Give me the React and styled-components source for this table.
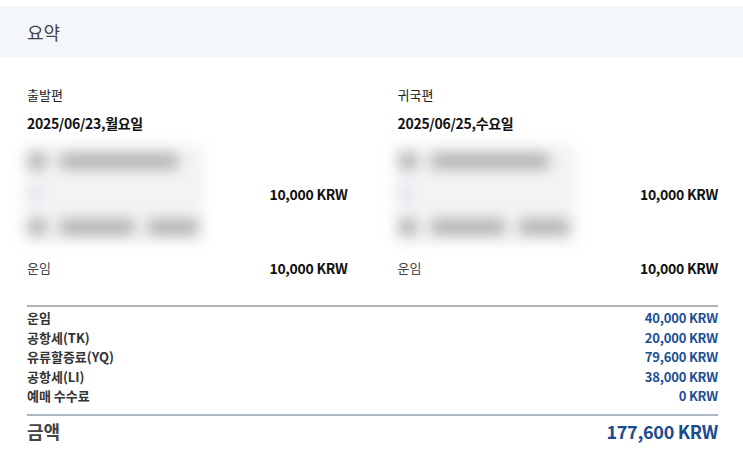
import React from "react";
import styled, { createGlobalStyle } from "styled-components";

const flights = [
  { label: "출발편", date: "2025/06/23,월요일", price: "10,000 KRW", fare: "10,000 KRW" },
  { label: "귀국편", date: "2025/06/25,수요일", price: "10,000 KRW", fare: "10,000 KRW" }
];

const breakdown = [
  { name: "운임", amount: "40,000 KRW" },
  { name: "공항세(TK)", amount: "20,000 KRW" },
  { name: "유류할증료(YQ)", amount: "79,600 KRW" },
  { name: "공항세(LI)", amount: "38,000 KRW" },
  { name: "예매 수수료", amount: "0 KRW" }
];

const App = () => {
  return (
    <>
      <GlobalStyle />
      <Page>
        <Header>요약</Header>
        <Body>
          <Columns>
            {flights.map(f => (
              <Flight key={f.label}>
                <Label>{f.label}</Label>
                <DateText>{f.date}</DateText>
                <Segment>
                  <Hidden>
                    <HiddenRow>
                      <Bar w={18} />
                      <Bar w={118} />
                    </HiddenRow>
                    <HiddenRow>
                      <Bar w={12} faint />
                    </HiddenRow>
                    <HiddenRow>
                      <Bar w={18} />
                      <Bar w={74} />
                      <Bar w={50} />
                    </HiddenRow>
                  </Hidden>
                  <Amount>{f.price}</Amount>
                </Segment>
                <FareRow>
                  <FareName>운임</FareName>
                  <Amount>{f.fare}</Amount>
                </FareRow>
              </Flight>
            ))}
          </Columns>
          <Breakdown>
            {breakdown.map(b => (
              <ItemRow key={b.name}>
                <ItemName>{b.name}</ItemName>
                <ItemAmount>{b.amount}</ItemAmount>
              </ItemRow>
            ))}
          </Breakdown>
          <TotalRow>
            <TotalName>금액</TotalName>
            <TotalAmount>177,600 KRW</TotalAmount>
          </TotalRow>
        </Body>
      </Page>
    </>
  );
};

const GlobalStyle = createGlobalStyle`
  body {
    margin: 0;
    background: #fff;
    font-family: "Noto Sans CJK KR", "Noto Sans", sans-serif;
    color: #222;
  }
`;

const Page = styled.div`
  padding-top: 6px;
`;

const Header = styled.div`
  background: #f3f6fa;
  height: 51px;
  padding-left: 27px;
  display: flex;
  align-items: center;
  font-size: 18px;
  color: #444;
`;

const Body = styled.div`
  padding: 0 25px 0 27px;
`;

const Columns = styled.div`
  display: grid;
  grid-template-columns: 1fr 1fr;
  column-gap: 50px;
  padding-top: 29px;
`;

const Flight = styled.div`
  display: flex;
  flex-direction: column;
`;

const Label = styled.div`
  font-size: 13px;
  line-height: 18px;
  color: #222;
`;

const DateText = styled.div`
  margin-top: 9px;
  font-size: 14px;
  line-height: 20px;
  font-weight: 700;
  color: #111;
  letter-spacing: -0.3px;
`;

const Segment = styled.div`
  margin-top: 12px;
  display: flex;
  align-items: center;
  justify-content: space-between;
`;

const Hidden = styled.div`
  margin-left: -3px;
  width: 180px;
  height: 98px;
  padding: 8px 0 8px 4px;
  box-sizing: border-box;
  background: #f3f3f5;
  filter: blur(7px);
  display: flex;
  flex-direction: column;
  justify-content: space-between;
`;

const HiddenRow = styled.div`
  display: flex;
  gap: 14px;
  height: 16px;
`;

const Bar = styled.div`
  width: ${p => p.w}px;
  height: 16px;
  background: ${p => (p.faint ? "#dfe2ea" : "#b2b2b4")};
`;

const Amount = styled.div`
  font-size: 14px;
  font-weight: 700;
  color: #111;
  letter-spacing: -0.3px;
`;

const FareRow = styled.div`
  margin-top: 15px;
  display: flex;
  justify-content: space-between;
  align-items: center;
  line-height: 20px;
`;

const FareName = styled.div`
  font-size: 13px;
  color: #444;
`;

const Breakdown = styled.div`
  margin-top: 27px;
  border-top: 2px solid #b4b4b6;
  padding: 1px 0 8px;
`;

const ItemRow = styled.div`
  display: flex;
  justify-content: space-between;
  align-items: center;
  height: 19.5px;
`;

const ItemName = styled.div`
  font-size: 13px;
  font-weight: 700;
  color: #333;
`;

const ItemAmount = styled.div`
  font-size: 13px;
  font-weight: 700;
  color: #1d4f94;
  letter-spacing: -0.2px;
`;

const TotalRow = styled.div`
  border-top: 2px solid #aeb6c4;
  display: flex;
  justify-content: space-between;
  align-items: center;
  height: 30px;
`;

const TotalName = styled.div`
  font-size: 18px;
  font-weight: 700;
  color: #444;
`;

const TotalAmount = styled.div`
  font-size: 18px;
  font-weight: 700;
  color: #1b4a8e;
  letter-spacing: -0.3px;
`;

export default App;
